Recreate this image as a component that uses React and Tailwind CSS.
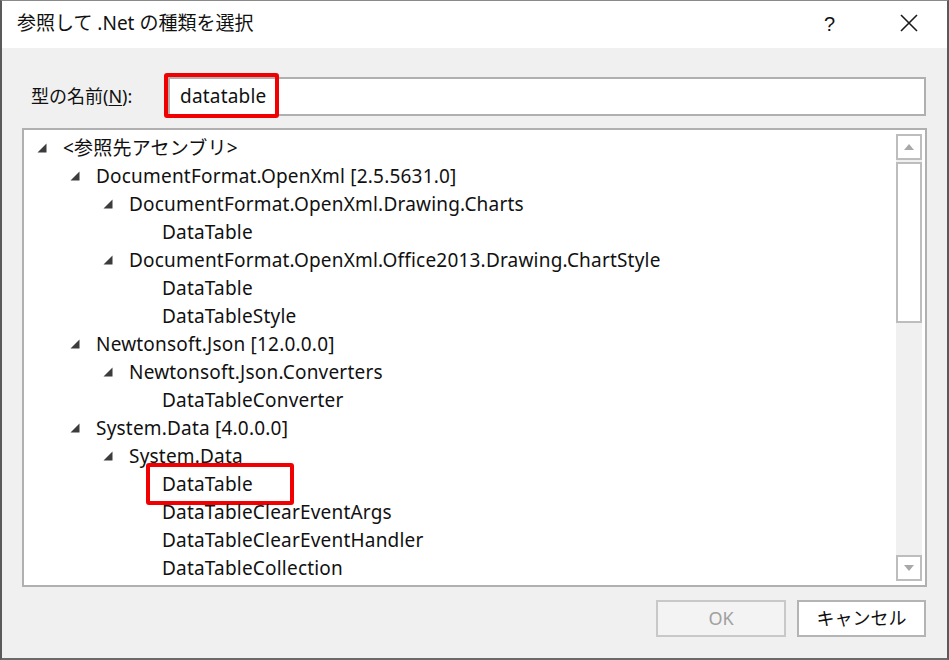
import React from "react";

const FONT = { fontFamily: '"Noto Sans", "Noto Sans CJK JP", sans-serif' };

const rows = [
  { level: 0, text: "<参照先アセンブリ>", open: true },
  { level: 1, text: "DocumentFormat.OpenXml [2.5.5631.0]", open: true },
  { level: 2, text: "DocumentFormat.OpenXml.Drawing.Charts", open: true },
  { level: 3, text: "DataTable" },
  { level: 2, text: "DocumentFormat.OpenXml.Office2013.Drawing.ChartStyle", open: true },
  { level: 3, text: "DataTable" },
  { level: 3, text: "DataTableStyle" },
  { level: 1, text: "Newtonsoft.Json [12.0.0.0]", open: true },
  { level: 2, text: "Newtonsoft.Json.Converters", open: true },
  { level: 3, text: "DataTableConverter" },
  { level: 1, text: "System.Data [4.0.0.0]", open: true },
  { level: 2, text: "System.Data", open: true },
  { level: 3, text: "DataTable", mark: true },
  { level: 3, text: "DataTableClearEventArgs" },
  { level: 3, text: "DataTableClearEventHandler" },
  { level: 3, text: "DataTableCollection" },
];

const indent = ["pl-[13px]", "pl-[46px]", "pl-[79px]", "pl-[112px]"];

function Tri() {
  return (
    <svg width="10" height="10" viewBox="0 0 10 10">
      <path d="M9.5 0.5 L9.5 9.5 L0.5 9.5 Z" fill="#3c3c3c" />
    </svg>
  );
}

export default function App() {
  return (
    <div
      className="w-[949px] h-[660px] bg-[#f0f0f0] flex flex-col border-l-2 border-r-2 border-t border-b-2 border-l-[#5a5a5a] border-r-[#5a5a5a] border-t-[#8a8a8a] border-b-[#6a6a6a] overflow-hidden text-[#111]"
      style={FONT}
    >
      {/* Title bar */}
      <div className="h-[47px] bg-white flex items-center pl-[15px] shrink-0">
        <div className="text-[19px] text-[#111] mt-[-2px]">参照して .Net の種類を選択</div>
        <div className="ml-auto flex items-center">
          <span className="text-[20px] mr-[65px] mt-[-2px]" style={{ fontFamily: '"Liberation Sans", sans-serif' }}>?</span>
          <svg width="18" height="18" viewBox="0 0 18 18" className="mr-[29px] mt-[-3px]">
            <path d="M1 1 L17 17 M17 1 L1 17" stroke="#1a1a1a" strokeWidth="1.6" />
          </svg>
        </div>
      </div>

      {/* Body */}
      <div className="flex-1 flex flex-col px-[20px]">
        {/* Name row */}
        <div className="flex items-center mt-[29px] h-[39px]">
          <div className="text-[18px] pl-[9px] w-[146px] shrink-0 text-[#111]">
            型の名前(<span className="underline underline-offset-2">N</span>):
          </div>
          <div className="relative flex-1 h-[39px] mr-[1px]">
            <div className="h-full bg-white border-2 border-[#b0b0b0] flex items-center pl-[10px] text-[19px] tracking-[0.2px] text-[#111]">
              datatable
            </div>
            <div className="absolute left-[-4px] top-[-4px] w-[115px] h-[45px] border-4 border-[#f00000] rounded-[3px]" />
          </div>
        </div>

        {/* Tree */}
        <div className="mt-[12px] h-[459px] bg-white border-2 border-[#b0b0b0] flex">
          <div className="flex-1 pt-[4px] overflow-hidden">
            {rows.map((r, i) => (
              <div key={i} className={"relative h-[28px] flex items-center text-[19px] tracking-[0.2px] text-[#111] whitespace-nowrap " + indent[r.level]}>
                <div className="w-[26px] shrink-0 flex items-center">{r.open ? <Tri /> : null}</div>
                <span>{r.text}</span>
                {r.mark ? (
                  <div className="absolute left-[122px] top-[-7px] w-[148px] h-[42px] border-4 border-[#f00000] rounded-[3px]" />
                ) : null}
              </div>
            ))}
          </div>
          {/* Scrollbar */}
          <div className="w-[26px] bg-[#f0f0f0] flex flex-col my-[4px] mr-[3px]">
            <div className="h-[26px] bg-white border-2 border-[#bdbdbd] flex items-center justify-center">
              <svg width="10" height="6" viewBox="0 0 10 6"><path d="M0 6 L5 0 L10 6 Z" fill="#a8a8a8" /></svg>
            </div>
            <div className="h-[161px] mt-[2px] bg-white border-2 border-[#bdbdbd]" />
            <div className="flex-1" />
            <div className="h-[26px] bg-white border-2 border-[#bdbdbd] flex items-center justify-center">
              <svg width="10" height="6" viewBox="0 0 10 6"><path d="M0 0 L5 6 L10 0 Z" fill="#a8a8a8" /></svg>
            </div>
          </div>
        </div>

        {/* Buttons */}
        <div className="flex justify-end gap-[11px] mt-[13px] pr-[1px]">
          <div className="w-[130px] h-[37px] border-2 border-[#c8c8c8] bg-[#f3f3f3] flex items-center justify-center text-[18px] text-[#a0a0a0]">
            OK
          </div>
          <div className="w-[129px] h-[37px] border-2 border-[#b4b4b4] bg-white flex items-center justify-center text-[18px] text-[#111]">
            キャンセル
          </div>
        </div>
      </div>
    </div>
  );
}
